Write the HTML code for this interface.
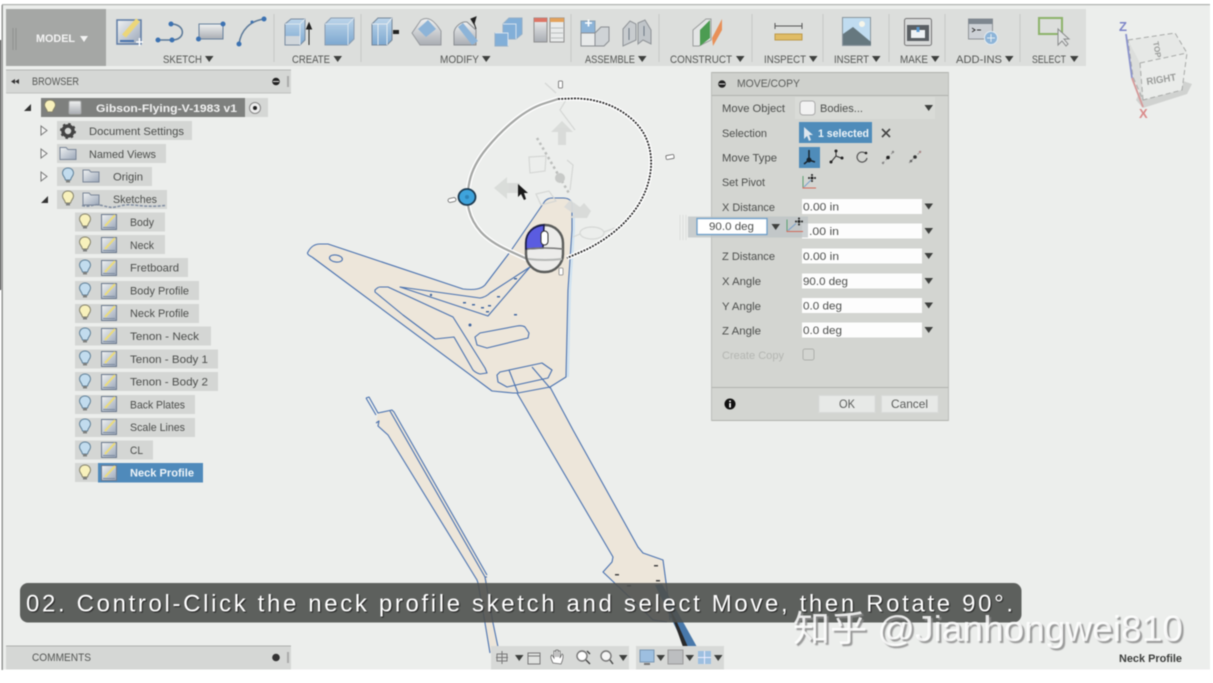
<!DOCTYPE html>
<html><head><meta charset="utf-8"><title>Move/Copy</title>
<style>
html,body{margin:0;padding:0;background:#fff;width:1213px;height:683px;overflow:hidden}
svg{display:block;filter:blur(.55px)}
text{font-family:"Liberation Sans","Noto Sans CJK SC",sans-serif;fill:#4c4e4c;font-size:11px}
.tl text,.tl{font-size:11px;fill:#555755}
.t{font-size:11px;fill:#4c4e4c}
.f{font-size:11px;fill:#5a5c5a}
.cap{font-size:24px;fill:#fff;text-shadow:1px 1px 1px #222}
.wm{font-size:36px;fill:#fff;fill-opacity:.85;text-shadow:2px 2px 1px #8a8a8a}
.g{fill:none;stroke:#4a72b0;stroke-width:1.1;stroke-linejoin:round}
</style></head><body>
<svg xmlns="http://www.w3.org/2000/svg" width="1213" height="683" viewBox="0 0 1213 683">
<defs>
<linearGradient id="bl" x1="0" y1="0" x2="0" y2="1"><stop offset="0" stop-color="#bcd5ea"/><stop offset="1" stop-color="#7da8d0"/></linearGradient>
<linearGradient id="gr" x1="0" y1="0" x2="0" y2="1"><stop offset="0" stop-color="#f0f1f1"/><stop offset="1" stop-color="#a9adb3"/></linearGradient>
<linearGradient id="sk" x1="0" y1="0" x2="1" y2="1"><stop offset="0" stop-color="#f0f2f2"/><stop offset="1" stop-color="#9aa6b8"/></linearGradient>
<g id="by"><path d="M0 -7C-4 -7 -5.5 -4 -5.5 -2C-5.5 1 -3 2 -2.5 5L2.5 5C3 2 5.5 1 5.5 -2C5.5 -4 4 -7 0 -7Z" fill="#f8f1bc" stroke="#85826a" stroke-width="1"/><rect x="-2" y="5" width="4" height="2.5" fill="#7f817f"/></g>
<g id="bb"><path d="M0 -7C-4 -7 -5.5 -4 -5.5 -2C-5.5 1 -3 2 -2.5 5L2.5 5C3 2 5.5 1 5.5 -2C5.5 -4 4 -7 0 -7Z" fill="#c2dcee" stroke="#5f8099" stroke-width="1"/><rect x="-2" y="5" width="4" height="2.5" fill="#7f817f"/></g>
<g id="sk1"><rect x="-7.5" y="-7.5" width="15" height="15" fill="url(#sk)" stroke="#6c7a8e" stroke-width="1"/><path d="M-4 4L6 -7" stroke="#ecdc7a" stroke-width="2"/><path d="M-6 5.5H6" stroke="#7c8ba0"/></g>
<g id="fo"><path d="M-8 -6H-2L0 -4H8V6H-8Z" fill="url(#sk)" stroke="#7a8698" stroke-width="1"/></g>
<path id="ar" d="M0 0H8.5L4.2 6Z" fill="#3e403e"/>
</defs>

<!-- frame -->
<rect width="1213" height="683" fill="#fff"/>
<rect x="2" y="4" width="1208" height="665.5" fill="#eceeec"/>
<rect x="2" y="4" width="1208" height="1.2" fill="#b0b2b0"/>
<rect x="1.5" y="5" width="1.4" height="665" fill="#8e908e"/>
<rect x="0" y="40" width="1" height="250" fill="#222"/>

<!-- toolbar -->
<rect x="6" y="9" width="1080" height="57" fill="#dcdedc"/>
<rect x="6" y="9" width="100" height="57" fill="#a5a7a5"/>
<path d="M13 28V50M16 28V50" stroke="#8f918f"/>
<text x="36" y="42" textLength="39" lengthAdjust="spacingAndGlyphs" style="fill:#f3f3f3;font-weight:bold;font-size:11px">MODEL</text>
<path d="M80 36H88L84 42Z" fill="#f3f3f3"/>
<g stroke="#c8cac8"><path d="M274 14V62M361 14V62M571 14V62M659 14V62M752 14V62M823 14V62M889 14V62M945 14V62M1020 14V62"/></g>

<!-- sketch icons -->
<rect x="117" y="20" width="24" height="24" fill="url(#sk)" stroke="#5f7da6" stroke-width="1.5"/>
<path d="M124 36L138 20" stroke="#ecd67a" stroke-width="5"/><path d="M136 42h7M139.5 38v8" stroke="#fff" stroke-width="1.6"/><path d="M120 41H134" stroke="#4b74ad" stroke-width="2"/>
<path d="M158 40H172C186 40 186 24 171 24" fill="none" stroke="#5a7898" stroke-width="1.5"/><circle cx="158" cy="40" r="2.5" fill="#3c72b2"/><circle cx="172" cy="40" r="2.5" fill="#3c72b2"/><circle cx="171" cy="24" r="2.5" fill="#3c72b2"/>
<rect x="199" y="24" width="24" height="15" fill="url(#gr)" stroke="#66809c"/><circle cx="198.5" cy="39" r="2.5" fill="#3c72b2"/><circle cx="223" cy="24" r="2.5" fill="#3c72b2"/>
<path d="M239 44C241 30 250 21 264 19" fill="none" stroke="#5a7898" stroke-width="1.5"/><circle cx="239" cy="44" r="2.5" fill="#3c72b2"/><circle cx="264" cy="19" r="2.5" fill="#3c72b2"/><circle cx="252" cy="22" r="1.5" fill="#3c72b2"/>

<!-- create icons -->
<path d="M285 24L291 19H305V40L300 45H285Z" fill="url(#bl)" stroke="#7a8ca0"/><path d="M285 24H300V45M300 24L305 19" fill="none" stroke="#dce6ee"/><rect x="285.5" y="36" width="14" height="8.5" fill="#d0d6db"/><path d="M309 45V27M306.5 29L309 23L311.5 29Z" stroke="#222" fill="#222"/>
<path d="M325 24L331 18H354V39L348 45H325Z" fill="url(#bl)" stroke="#8a9cb0"/><path d="M325 24H348V45M348 24L354 18" fill="none" stroke="#d7e3ed"/>

<!-- modify icons -->
<path d="M372 24L378 18H392V40L387 45H372Z" fill="url(#bl)" stroke="#75879a"/><path d="M372 24H378V45M378 24H387V45M387 24L392 18" fill="none" stroke="#e4ebf0"/><path d="M393 32h6" stroke="#222" stroke-width="4"/>
<path d="M412 33L421 20C428 16 434 20 441 31V45H420Z" fill="url(#gr)" stroke="#96999d"/><path d="M418 29L428 20L436 29L426 37Z" fill="#8db4d8"/>
<path d="M454 32C455 26 462 21 467 22L476 30V45H454Z" fill="url(#gr)" stroke="#8a8e92"/><path d="M458 27L463 23L478 41L472 45Z" fill="#8db4d8"/><path d="M473 20L476 29M471 19L476 17L474 24Z" stroke="#222" fill="#222"/>
<path d="M495 33H503V24L509 18H522V34L516 39H508V46H495Z" fill="#82afd8" stroke="#94aec6"/><path d="M503 24H516V39M495 33H508V46" fill="none" stroke="#d5e2ee"/>
<rect x="534" y="18" width="13" height="24" fill="url(#gr)" stroke="#8f8f8f"/><rect x="534" y="18" width="13" height="4" fill="#dc7566"/><rect x="550" y="18" width="14" height="24" fill="#e9ebeb" stroke="#8f8f8f"/><rect x="550" y="18" width="14" height="4" fill="#e3a25c"/><path d="M551 28H563M551 33H563M551 38H563" stroke="#b9bcbc"/>

<!-- assemble icons -->
<path d="M581 21H595V33H581Z" fill="#8db4d8" stroke="#8ba0b2"/><path d="M581 33H595V46H581Z" fill="#e8eaea" stroke="#8a8e92"/><path d="M595 33L601 27H609V41L604 46H595Z" fill="#cfd3d6" stroke="#8a8e92"/><path d="M585 23h7M588.5 19.5v7" stroke="#fff" stroke-width="1.6"/>
<path d="M623 29L630 21L636 24V40L623 46Z" fill="#c8cccf" stroke="#8f9397"/><path d="M638 23L645 20L651 30V44L643 40L638 44Z" fill="#c0c5c9" stroke="#8f9397"/><path d="M629 28V40M644 26V36" stroke="#6e7a85"/>

<!-- construct -->
<path d="M693 30L706 19L711 19V40L699 46H693Z" fill="#e3e5e5" stroke="#9a9c9c"/><path d="M700 30L710 20V38L700 46Z" fill="#4c9c52"/><path d="M712 38L722 19V30L713 46Z" fill="#e89058"/>

<!-- inspect -->
<path d="M775 26H802M775 23V29M802 23V29" stroke="#555" fill="none"/><rect x="775" y="34" width="27" height="6" fill="#e0bc66" stroke="#bd9a4a"/>

<!-- insert -->
<rect x="842.5" y="17.500" width="28" height="28" fill="#c0dcf0" stroke="#8a969e"/><circle cx="862" cy="24" r="3" fill="#f5f5ea"/><path d="M843 45V34L853 27L871 42V45Z" fill="#66787f"/>

<!-- make -->
<rect x="904.5" y="18.5" width="27" height="27" rx="2" fill="#d7d9d9" stroke="#777"/><rect x="907" y="25" width="22" height="16" fill="#5a5f63"/><rect x="911" y="30" width="14" height="8" fill="#eef2f4"/><path d="M918 27v5" stroke="#5a98cf" stroke-width="3"/>

<!-- add-ins -->
<rect x="968.5" y="19" width="24" height="20" fill="#cdd1d6" stroke="#8f9397"/><rect x="968.5" y="19" width="24" height="5" fill="#7e8790"/><path d="M972 28L975 30L972 32M977 30H981" stroke="#333" fill="none"/><circle cx="991" cy="38" r="6.5" fill="#8db4d8" stroke="#e4ecf2"/><path d="M987 38H995M991 34V42" stroke="#e4ecf2"/>

<!-- select -->
<rect x="1039" y="18" width="23" height="16" fill="none" stroke="#8cb26a" stroke-width="2"/><path d="M1058 29V45L1062 41L1066 46L1068 44L1064 39H1069Z" fill="#dfe1e1" stroke="#8a8c8c"/>

<!-- toolbar labels -->
<g class="tl">
<text x="163" y="63" textLength="39" lengthAdjust="spacingAndGlyphs">SKETCH</text><use href="#ar" x="205" y="56"/>
<text x="292" y="63" textLength="38" lengthAdjust="spacingAndGlyphs">CREATE</text><use href="#ar" x="333.5" y="56"/>
<text x="440" y="63" textLength="39" lengthAdjust="spacingAndGlyphs">MODIFY</text><use href="#ar" x="482" y="56"/>
<text x="585" y="63" textLength="50" lengthAdjust="spacingAndGlyphs">ASSEMBLE</text><use href="#ar" x="638" y="56"/>
<text x="670" y="63" textLength="62" lengthAdjust="spacingAndGlyphs">CONSTRUCT</text><use href="#ar" x="736" y="56"/>
<text x="764" y="63" textLength="42" lengthAdjust="spacingAndGlyphs">INSPECT</text><use href="#ar" x="809" y="56"/>
<text x="834" y="63" textLength="35" lengthAdjust="spacingAndGlyphs">INSERT</text><use href="#ar" x="872" y="56"/>
<text x="900" y="63" textLength="28" lengthAdjust="spacingAndGlyphs">MAKE</text><use href="#ar" x="931" y="56"/>
<text x="956" y="63" textLength="46" lengthAdjust="spacingAndGlyphs">ADD-INS</text><use href="#ar" x="1005" y="56"/>
<text x="1032" y="63" textLength="34" lengthAdjust="spacingAndGlyphs">SELECT</text><use href="#ar" x="1070" y="56"/>
</g>

<!-- browser header -->
<rect x="6" y="70" width="285" height="23" fill="#d5d7d5"/>
<path d="M6 70H291" stroke="#b5b7b5"/><path d="M6 93H291" stroke="#c0c2c0"/>
<path d="M15 81.5L19 79V84ZM11 81.5L15 79V84Z" fill="#333"/>
<text class="tl" x="32" y="85" textLength="47" lengthAdjust="spacingAndGlyphs">BROWSER</text>
<circle cx="276" cy="81.5" r="3.8" fill="#222"/><path d="M273 81.5H279" stroke="#ddd"/>
<path d="M288 76V87" stroke="#aaa" stroke-width="2"/>

<!-- tree -->
<rect x="41" y="98" width="204" height="19" fill="#7e807e"/><rect x="245" y="98" width="23" height="19" fill="#d5d7d5"/>
<path d="M24 111L31 104V111Z" fill="#333"/>
<use href="#by" x="50" y="107"/>
<rect x="69" y="101" width="12" height="13" rx="1.5" fill="url(#gr)" stroke="#a8aaaa"/>
<text x="96" y="112" textLength="141" lengthAdjust="spacingAndGlyphs" style="fill:#f1f1f1;font-weight:bold">Gibson-Flying-V-1983 v1</text>
<circle cx="255" cy="108" r="5.5" fill="#eee" stroke="#888"/><circle cx="255" cy="108" r="2" fill="#222"/>

<g fill="#d4d6d4">
<rect x="57" y="121" width="135" height="19"/><rect x="57" y="144" width="109" height="19"/><rect x="57" y="167" width="95" height="19"/><rect x="57" y="190" width="110" height="19"/>
<rect x="75" y="212.5" width="90" height="19"/><rect x="75" y="235" width="90" height="19"/><rect x="75" y="258" width="113" height="19"/><rect x="75" y="281" width="124" height="19"/><rect x="75" y="304" width="124" height="19"/><rect x="75" y="326.5" width="136" height="19"/><rect x="75" y="349.5" width="143" height="19"/><rect x="75" y="372" width="143" height="19"/><rect x="75" y="395" width="120" height="19"/><rect x="75" y="418" width="120" height="19"/><rect x="75" y="440.5" width="78" height="19"/><rect x="75" y="463" width="24" height="19"/>
</g>
<rect x="98" y="463" width="105" height="19.5" fill="#4f8abb"/>

<g fill="#f4f5f4" stroke="#777" stroke-width="1">
<path d="M41 126L47 130.5L41 135Z"/><path d="M41 149L47 153.5L41 158Z"/><path d="M41 172L47 176.5L41 181Z"/>
</g>
<path d="M41 203L48 196V203Z" fill="#333"/>

<!-- gear -->
<circle cx="68" cy="131" r="5" fill="none" stroke="#444" stroke-width="3.5"/><circle cx="68" cy="131" r="7" fill="none" stroke="#444" stroke-width="2" stroke-dasharray="2.5 3"/>
<use href="#fo" x="68" y="153.5"/>
<use href="#bb" x="68" y="175"/><use href="#fo" x="91" y="176"/>
<use href="#by" x="68" y="198"/><use href="#fo" x="91" y="199"/>
<path d="M82 205.5C92 208 92 203 102 205.5S112 208 122 205.5S142 208 165 205.5" fill="none" stroke="#7f8ca0" stroke-width="1.5" stroke-dasharray="3 1.5"/>

<use href="#by" x="85" y="221"/><use href="#sk1" x="109" y="222"/>
<use href="#by" x="85" y="244"/><use href="#sk1" x="109" y="245"/>
<use href="#bb" x="85" y="267"/><use href="#sk1" x="109" y="268"/>
<use href="#bb" x="85" y="290"/><use href="#sk1" x="109" y="291"/>
<use href="#by" x="85" y="312"/><use href="#sk1" x="109" y="313"/>
<use href="#bb" x="85" y="335"/><use href="#sk1" x="109" y="336"/>
<use href="#bb" x="85" y="358"/><use href="#sk1" x="109" y="359"/>
<use href="#bb" x="85" y="381"/><use href="#sk1" x="109" y="382"/>
<use href="#bb" x="85" y="403"/><use href="#sk1" x="109" y="404"/>
<use href="#bb" x="85" y="426"/><use href="#sk1" x="109" y="427"/>
<use href="#bb" x="85" y="449"/><use href="#sk1" x="109" y="450"/>
<use href="#by" x="85" y="472"/><use href="#sk1" x="109" y="473"/>

<g class="t">
<text x="89" y="135" textLength="95" lengthAdjust="spacingAndGlyphs">Document Settings</text>
<text x="89" y="158" textLength="67" lengthAdjust="spacingAndGlyphs">Named Views</text>
<text x="113" y="180.5" textLength="30" lengthAdjust="spacingAndGlyphs">Origin</text>
<text x="113" y="203" textLength="44" lengthAdjust="spacingAndGlyphs">Sketches</text>
<text x="130" y="226" textLength="24" lengthAdjust="spacingAndGlyphs">Body</text>
<text x="130" y="249" textLength="24" lengthAdjust="spacingAndGlyphs">Neck</text>
<text x="130" y="271.5" textLength="49" lengthAdjust="spacingAndGlyphs">Fretboard</text>
<text x="130" y="294.5" textLength="59" lengthAdjust="spacingAndGlyphs">Body Profile</text>
<text x="130" y="317" textLength="59" lengthAdjust="spacingAndGlyphs">Neck Profile</text>
<text x="130" y="340" textLength="69" lengthAdjust="spacingAndGlyphs">Tenon - Neck</text>
<text x="130" y="363" textLength="78" lengthAdjust="spacingAndGlyphs">Tenon - Body 1</text>
<text x="130" y="385.5" textLength="78" lengthAdjust="spacingAndGlyphs">Tenon - Body 2</text>
<text x="130" y="408.5" textLength="55" lengthAdjust="spacingAndGlyphs">Back Plates</text>
<text x="130" y="431" textLength="55" lengthAdjust="spacingAndGlyphs">Scale Lines</text>
<text x="130" y="454" textLength="13" lengthAdjust="spacingAndGlyphs">CL</text>
</g>
<text x="130" y="476.5" textLength="64" lengthAdjust="spacingAndGlyphs" style="fill:#eef4f8;font-weight:bold">Neck Profile</text>

<!-- guitar body -->
<path d="M308 252Q312 244 320 244L328 244L463 289Q472 290 477 289Q482 288 485 285L510 252L545 201Q548 198 552 198L563 198Q570 198 572 203L572 230L568 290L566 377L550 387L573 430L638 547L643 553L663 560L668 597L670 620L667 622L653 620L643 610L603 572L612 562L613 557L517 393L513 393L492 391L312 257Z" fill="#ede6da"/>
<path class="g" d="M312 257Q306 254 308 252Q312 244 320 244L328 244L463 289Q472 290 477 289Q482 288 485 285L510 252L545 201Q548 198 552 198L563 198Q570 198 572 203L572 230L568 290L566 377L550 387L573 430L638 547L643 553L663 560L668 597L670 620"/>
<path d="M574 203L574 230L570 290L568 377" fill="none" stroke="#cfe2f0" stroke-width="2"/>
<path class="g" d="M312 257L492 391L513 393L517 393L613 557L612 562L603 572L643 610L653 620L667 622"/>
<ellipse cx="336" cy="258.5" rx="6.5" ry="3.5" transform="rotate(8 336 258)" class="g" fill="none"/>
<path class="g" d="M400 287L480 298Q486 297 490 293L530 267L488 316Z"/>
<path class="g" d="M375 290Q378 287 380 287L388 287L453 317L485 368L487 373L480 374Q476 373 473 370L454 337L435 339L403 315L375 292Z"/>
<path class="g" d="M475 337L480 333L517 326Q522 325 525 327L529 333L528 338L487 348L477 345Z"/>
<path class="g" d="M497 375L500 372L542 363L552 370L548 378L507 387L498 382Z"/>
<path class="g" d="M509 370L518 393M532 367L550 388M518 393L550 387"/>
<g fill="#41669f"><circle cx="431" cy="295" r="1.2"/><rect x="463" y="302" width="3" height="1.5"/><rect x="472" y="304" width="3" height="1.5"/><rect x="481" y="307" width="3" height="1.5"/><rect x="488" y="305" width="3" height="1.5"/><rect x="497" y="296" width="3" height="1.5"/><rect x="514" y="314" width="3" height="1.5"/><circle cx="470" cy="325" r="1.5"/><rect x="486" y="311" width="3" height="1.5"/><rect x="514" y="278" width="3" height="1.5"/></g>
<g fill="#444"><rect x="654" y="565" width="4" height="1.5"/><rect x="615" y="574" width="4" height="1.5"/><rect x="656" y="580" width="4" height="1.5"/><rect x="627" y="585" width="4" height="1.5"/></g>

<!-- second profile -->
<path d="M376 423L378 413L392 410L487 575L493 623L498 647L490 653L485 623L478 583L477 580L388 435Z" fill="#ede6da"/>
<path class="g" d="M366 398L369 397L378 413L392 410L394 412L487 575M366 398L376 415M390 411L485 577L487 577M376 423L379 421L378 426L388 435L477 580L478 583L485 623L490 653M485 577L493 623L498 647"/>
<!-- dark end -->
<path d="M655 585L662 584L697 647L685 647Z" fill="#4878aa"/><path d="M668 605L676 620L688 647L683 647Z" fill="#2a2a2a"/>

<!-- gizmo ghost -->
<g fill="#d9dbd9" opacity=".95">
<path d="M562 121L573 132H566V145H558V132H551Z"/>
<path d="M494 188L507 177V183H520V193H507V199Z"/>
<path d="M591 211L587 218L570 218L574 214L564 207L570 200L580 207L584 203Z"/>
</g>
<path d="M537 138L570 195" stroke="#bcbebc" stroke-width="2.5" stroke-dasharray="2.5 3"/>
<circle cx="560" cy="178" r="5" fill="#c8cac8"/>
<g fill="none" stroke="#d5d7d5" stroke-width="1.2">
<path d="M529 157L546 156L545 171L530 173Z"/><path d="M536 194L549 191L556 201L541 205Z"/>
<ellipse cx="592" cy="233" rx="12" ry="6"/><path d="M573 237L580 234M604 232L615 228M566 100L560 110L575 130M545 83L556 93M567 160L573 165L570 190"/>
</g>
<path d="M680 215V240M683 215V240M686 215V240" stroke="#dcdedc"/>

<!-- ring -->
<path d="M558 99L572.5 98.5Q587 98 602 102.5Q617 107 630 117.5Q643 128 648 143Q653 158 650 175Q647 192 637 207Q627 222 612 233.5Q597 245 582 251.5L567 258" fill="none" stroke="#fff" stroke-width="4.5"/>
<path d="M558 99L572.5 98.5Q587 98 602 102.5Q617 107 630 117.5Q643 128 648 143Q653 158 650 175Q647 192 637 207Q627 222 612 233.5Q597 245 582 251.5L567 258" fill="none" stroke="#2a2a2a" stroke-width="1.8" stroke-dasharray="2 1.2"/>
<path d="M558 99L544 103.5Q530 108 515 120Q500 132 486.5 148.5Q473 165 469.5 181.5Q466 198 469 210Q472 222 481 232Q490 242 508.5 250.5L527 259" fill="none" stroke="#fff" stroke-width="5"/>
<path d="M558 99L544 103.5Q530 108 515 120Q500 132 486.5 148.5Q473 165 469.5 181.5Q466 198 469 210Q472 222 481 232Q490 242 508.5 250.5L527 259" fill="none" stroke="#a4a6a4" stroke-width="2.2"/>

<!-- handles -->
<ellipse cx="467" cy="197" rx="8.5" ry="8" fill="#3ea3dc" stroke="#1d3a50" stroke-width="1.8"/><circle cx="467" cy="197" r="2" fill="#2f84b8"/>
<rect x="448" y="198" width="8" height="4" rx="2" fill="#fff" stroke="#666" stroke-width=".8" transform="rotate(-12 452 200)"/>
<rect x="558.5" y="81" width="4" height="7" rx="1" fill="#fff" stroke="#666" stroke-width=".8"/>
<rect x="666" y="155" width="8" height="4" rx="1" fill="#fff" stroke="#666" stroke-width=".8" transform="rotate(-10 670 157)"/>
<rect x="559" y="268" width="4" height="7" rx="1" fill="#fff" stroke="#888" stroke-width=".8"/>

<!-- cursor -->
<path d="M518 184L518 197L521 194L524 200L526 199L524 193L528 193Z" fill="#1a1a1a"/>

<!-- mouse -->
<rect x="526" y="225" width="37" height="47" rx="18" fill="#ececea" stroke="#5b5d5b" stroke-width="2.4"/>
<path d="M526 249V243C526 232 534 226 544 225L543 248Z" fill="#5a5ce0" stroke="#17184a" stroke-width="1.5"/>
<rect x="541" y="231" width="7" height="14" rx="3.5" fill="#fff" stroke="#333"/>
<path d="M527 249Q545 247 563 249" stroke="#777" stroke-width="1.5" fill="none"/><path d="M528 259Q545 261 562 259" stroke="#b5b7b5" stroke-width="2" fill="none"/>

<!-- move/copy panel -->
<rect x="711.5" y="72" width="237" height="349" fill="#d3d5d1"/>
<rect x="711.5" y="72" width="237" height="23" fill="#cfd1cd"/>
<path d="M711 72.5H949M711 95.5H949M711 387.5H949M711 420.5H949" stroke="#b0b2ae"/><path d="M711.5 72V421M948.5 72V421" stroke="#bcbeba"/>
<circle cx="722" cy="84" r="3.8" fill="#222"/><path d="M719 84H725" stroke="#ddd"/>
<text class="f" x="737" y="87" textLength="63" lengthAdjust="spacingAndGlyphs">MOVE/COPY</text>
<rect x="795" y="97" width="140" height="22" fill="#d9dbd7"/>
<rect x="800" y="101" width="15" height="14" rx="3" fill="#f2f2f2" stroke="#aaa"/>
<use href="#ar" x="924.5" y="105"/><text class="t" x="820" y="112" textLength="43" lengthAdjust="spacingAndGlyphs">Bodies...</text>

<g class="t">
<text x="722" y="112" textLength="63" lengthAdjust="spacingAndGlyphs">Move Object</text>
<text x="722" y="137" textLength="45" lengthAdjust="spacingAndGlyphs">Selection</text>
<text x="722" y="161.5" textLength="55" lengthAdjust="spacingAndGlyphs">Move Type</text>
<text x="722" y="186" textLength="43" lengthAdjust="spacingAndGlyphs">Set Pivot</text>
<text x="722" y="211" textLength="53" lengthAdjust="spacingAndGlyphs">X Distance</text>
<text x="722" y="260" textLength="53" lengthAdjust="spacingAndGlyphs">Z Distance</text>
<text x="722" y="285" textLength="39" lengthAdjust="spacingAndGlyphs">X Angle</text>
<text x="722" y="310" textLength="39" lengthAdjust="spacingAndGlyphs">Y Angle</text>
<text x="722" y="334.5" textLength="39" lengthAdjust="spacingAndGlyphs">Z Angle</text>
</g>
<text x="722" y="359" textLength="62" lengthAdjust="spacingAndGlyphs" style="fill:#b4b6b2">Create Copy</text>
<rect x="803" y="349" width="11" height="11" rx="2" fill="#d3d5d1" stroke="#aeb0ac"/>

<rect x="799" y="122" width="73" height="21" fill="#4f8cba"/>
<path d="M804 127V139L807 136L809 141L811 140L809 135H813Z" fill="#dde6ee"/>
<text x="818" y="137" textLength="51" lengthAdjust="spacingAndGlyphs" style="fill:#eef4f8;font-weight:bold">1 selected</text>
<path d="M882 129L890 137M890 129L882 137" stroke="#444" stroke-width="1.6"/>

<rect x="799" y="147" width="21" height="21" fill="#4f8cba"/>
<path d="M809 150V160M809 160L804 164M809 160L815 162" stroke="#18242e" stroke-width="1.5" fill="none"/><circle cx="809" cy="160" r="2.5" fill="#18242e"/>
<path d="M836 156V152M836 156L831 162M836 156L841 158" stroke="#333" fill="none"/><circle cx="836" cy="151" r="1.5" fill="#222"/><circle cx="831" cy="162" r="1.5" fill="#222"/><circle cx="842" cy="158" r="1.5" fill="#222"/>
<path d="M865 153A5 5 0 1 0 867 158" stroke="#555" stroke-width="1.2" fill="none"/><circle cx="866" cy="153" r="1.3" fill="#222"/>
<path d="M883 163L893 152" stroke="#999" stroke-width="1" stroke-dasharray="2 2"/><circle cx="888" cy="157.5" r="1.8" fill="#222"/><circle cx="893" cy="152" r="1.2" fill="#888"/><circle cx="883" cy="163" r="1.2" fill="#888"/>
<path d="M909 163L921 151" stroke="#999" stroke-dasharray="2 2"/><circle cx="915" cy="157" r="1.8" fill="#333"/><circle cx="911" cy="161" r="1.3" fill="#666"/><circle cx="920" cy="152" r="1.2" fill="#a88"/>
<g><path d="M803 176V188H816" stroke="#d06a5a" fill="none"/><path d="M803 176V187" stroke="#5aa070"/><path d="M804 187L811 180" stroke="#7aa0c8"/><circle cx="812" cy="178" r="1.5" fill="#222"/><circle cx="809" cy="178" r="1" fill="#222"/><circle cx="815" cy="178" r="1" fill="#222"/><circle cx="812" cy="175" r="1" fill="#222"/><circle cx="812" cy="181" r="1" fill="#222"/></g>

<g fill="#fdfdfd">
<rect x="802" y="199" width="120" height="15"/><rect x="802" y="223.5" width="120" height="15"/><rect x="802" y="248.5" width="120" height="15"/><rect x="802" y="273.5" width="120" height="15"/><rect x="802" y="298" width="120" height="15"/><rect x="802" y="322.5" width="120" height="15"/>
</g>
<g class="t">
<text x="803" y="210.5" textLength="36" lengthAdjust="spacingAndGlyphs">0.00 in</text>
<text x="809" y="235" textLength="30" lengthAdjust="spacingAndGlyphs">.00 in</text>
<text x="803" y="260" textLength="36" lengthAdjust="spacingAndGlyphs">0.00 in</text>
<text x="803" y="285" textLength="45" lengthAdjust="spacingAndGlyphs">90.0 deg</text>
<text x="803" y="309.5" textLength="39" lengthAdjust="spacingAndGlyphs">0.0 deg</text>
<text x="803" y="334" textLength="39" lengthAdjust="spacingAndGlyphs">0.0 deg</text>
</g>
<use href="#ar" x="924.5" y="203.5"/><use href="#ar" x="924.5" y="228"/><use href="#ar" x="924.5" y="253"/><use href="#ar" x="924.5" y="278"/><use href="#ar" x="924.5" y="302.5"/><use href="#ar" x="924.5" y="327"/>

<!-- floating input -->
<rect x="688" y="216.5" width="120" height="21" fill="#bcc2c4" fill-opacity=".75"/>
<rect x="697" y="218.5" width="70" height="16" fill="#fff" stroke="#6d9fc9" stroke-width="1.3"/>
<text class="t" x="709" y="230" textLength="45" lengthAdjust="spacingAndGlyphs">90.0 deg</text>
<use href="#ar" x="771.5" y="224"/>
<g transform="translate(-9 45.5)"><path d="M796 174V186H812" stroke="#d06a5a" fill="none"/><path d="M796 174V185" stroke="#5aa070"/><path d="M797 185L805 178" stroke="#7aa0c8"/><circle cx="808" cy="176" r="1.5" fill="#222"/><circle cx="805" cy="176" r="1" fill="#222"/><circle cx="811" cy="176" r="1" fill="#222"/><circle cx="808" cy="173" r="1" fill="#222"/><circle cx="808" cy="179" r="1" fill="#222"/></g>

<!-- footer -->
<circle cx="730" cy="404" r="5.5" fill="#111"/><rect x="729.2" y="403" width="1.7" height="4.5" fill="#fff"/><rect x="729.2" y="400.5" width="1.7" height="1.5" fill="#fff"/>
<rect x="819" y="395.5" width="56" height="17" fill="#e7e9e7" stroke="#d9dbd9"/><rect x="881.5" y="395.5" width="56.5" height="17" fill="#e7e9e7" stroke="#d9dbd9"/>
<text class="f" x="839" y="408" textLength="16" lengthAdjust="spacingAndGlyphs" style="font-size:12px">OK</text>
<text class="f" x="891" y="408" textLength="37" lengthAdjust="spacingAndGlyphs" style="font-size:12px">Cancel</text>

<!-- view cube -->
<path d="M1136 100L1143 108L1187 94L1192 84L1150 70Z" fill="#c4c6c4" opacity=".7"/>
<path d="M1128 40L1175 33L1187 53L1140 63Z" fill="#e6e8e6"/>
<path d="M1140 63L1187 53L1182 90L1143 100Z" fill="#eaecea"/>
<path d="M1128 40L1140 63L1143 100L1133 77Z" fill="#dcdedc"/>
<path d="M1128 40L1175 33L1187 53L1182 90L1143 100L1133 77ZM1140 63L1187 53M1140 63L1143 100" fill="none" stroke="#a8aaa8" stroke-dasharray="5 3"/>
<path d="M1126 34L1132 78" stroke="#8b93cc" stroke-width="1.8"/><path d="M1132 78L1143 107" stroke="#d59a9a" stroke-width="1.8"/>
<text x="1119" y="31" style="font-size:13px;fill:#7d85c8;font-weight:bold">Z</text>
<text x="1139" y="118" style="font-size:13px;fill:#da8a8a;font-weight:bold">X</text>
<text x="1147" y="85" transform="rotate(-9 1147 85)" textLength="30" lengthAdjust="spacingAndGlyphs" style="font-size:10px;fill:#9a9c9a;font-weight:bold">RIGHT</text>
<text x="1153" y="42" transform="rotate(80 1153 42)" style="font-size:8px;fill:#9a9c9a;font-weight:bold">TOP</text>

<!-- caption -->
<rect x="20" y="583" width="1001.5" height="39.5" rx="8" fill="#4e504e" fill-opacity=".9"/>
<text class="cap" x="26" y="611.5" textLength="987" lengthAdjust="spacing">02. Control-Click the neck profile sketch and select Move, then Rotate 90°.</text>

<!-- comments -->
<rect x="6" y="646" width="285" height="23.5" fill="#d5d7d5"/><path d="M6 646H291" stroke="#aeb0ae"/>
<text class="tl" x="32" y="661" textLength="59" lengthAdjust="spacingAndGlyphs">COMMENTS</text>
<circle cx="276" cy="657.5" r="3.8" fill="#333"/><path d="M288 652V663" stroke="#aaa" stroke-width="2"/>

<!-- nav bar -->
<rect x="491" y="646" width="138" height="23.5" fill="#d7d9d7"/><rect x="636" y="646" width="88" height="23.5" fill="#d7d9d7"/>
<path d="M502 651V664M496 657.5H508M497 654H507V661H497Z" stroke="#777" fill="none"/>
<use href="#ar" x="515" y="655"/>
<rect x="528" y="653" width="12" height="11" fill="#dfe1df" stroke="#777"/><path d="M528 656H540" stroke="#777"/>
<path d="M553 663C551 659 550 656 552 655L554 658V651H556V657V650H558V657V651H560V658L562 654C564 654 563 660 561 664Z" fill="#fff" stroke="#666" stroke-width=".8"/>
<circle cx="582" cy="656" r="5" fill="#fff" stroke="#777" stroke-width="1.4"/><path d="M586 660L590 664M587 651L590 654" stroke="#444" stroke-width="1.4"/>
<circle cx="606" cy="656" r="5" fill="#f5f5f5" stroke="#777" stroke-width="1.4"/><path d="M610 660L613 664" stroke="#444" stroke-width="1.4"/>
<use href="#ar" x="619" y="655"/>
<rect x="640" y="650" width="14" height="12" fill="#9dbfe0" stroke="#7a98b4"/><path d="M644 664H650" stroke="#777" stroke-width="2"/>
<use href="#ar" x="656.5" y="655"/>
<rect x="668" y="650" width="15" height="14" fill="#bcbec0" stroke="#999"/>
<use href="#ar" x="685.5" y="655"/>
<rect x="698" y="651" width="13" height="13" fill="#9dbfe0"/><path d="M704.5 651V664M698 657.5H711" stroke="#eef" stroke-width="1"/>
<use href="#ar" x="714" y="655"/>

<text x="1119" y="662" textLength="63" lengthAdjust="spacingAndGlyphs" style="font-weight:bold;fill:#3c3e3c">Neck Profile</text>

<!-- watermark -->
<text class="wm" x="793" y="641" textLength="390" lengthAdjust="spacingAndGlyphs">知乎 @Jianhongwei810</text>
</svg>
</body></html>
